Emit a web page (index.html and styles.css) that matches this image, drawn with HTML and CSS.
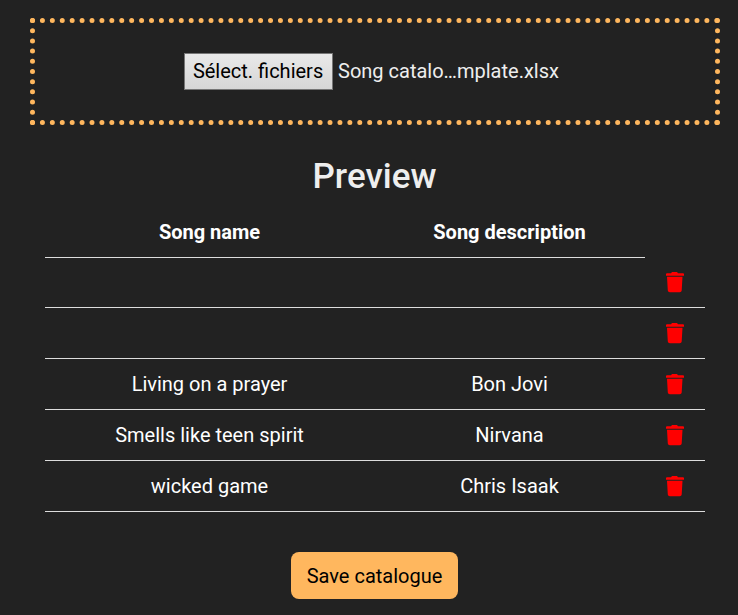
FILE: index.html
```html
<!DOCTYPE html>
<html lang="en">
<head>
<meta charset="utf-8">
<title>Song catalogue</title>
<link rel="stylesheet" href="styles.css">
</head>
<body>
<svg width="0" height="0" class="defs"><symbol id="trash" viewBox="0 0 18 21"><path d="M5 1.200 6 0h5l1 1.200h5l1 .6v2H0v-2l1-.6zM1 4.800h15.500L15.700 18.500q-.2 1.800-2 1.800H3.800q-1.800 0-2-1.800z"/></symbol></svg>
<main class="page">
  <div class="dropzone">
    <button class="file-button">Sélect. fichiers</button>
    <span class="file-name">Song catalo…mplate.xlsx</span>
  </div>
  <h1 class="title">Preview</h1>
  <table class="songs">
    <thead><tr><th class="col-name">Song name</th><th class="col-desc">Song description</th><td class="col-action"></td></tr></thead>
    <tbody>
      <tr class="first"><td></td><td></td><td><svg class="icon"><use href="#trash"/></svg></td></tr>
      <tr><td></td><td></td><td><svg class="icon"><use href="#trash"/></svg></td></tr>
      <tr><td>Living on a prayer</td><td>Bon Jovi</td><td><svg class="icon"><use href="#trash"/></svg></td></tr>
      <tr><td>Smells like teen spirit</td><td>Nirvana</td><td><svg class="icon"><use href="#trash"/></svg></td></tr>
      <tr><td>wicked game</td><td>Chris Isaak</td><td><svg class="icon"><use href="#trash"/></svg></td></tr>
    </tbody>
  </table>
  <button class="save">Save catalogue</button>
</main>
</body>
</html>
```

FILE: styles.css
```css
* { box-sizing: border-box; }
body { margin: 0; background: #222; color: #fff; font: 20px/24px Roboto, sans-serif; }
.defs { display: block; }
.page { width: 690px; margin: 18px 0 0 30px; display: flex; flex-direction: column; align-items: center; }
.dropzone { width: 100%; height: 107px; border: 5px dotted #ffb75e; display: flex; align-items: center; justify-content: center; gap: 5px; padding-right: 7px; }
.file-button { height: 37px; width: 149px; padding: 0 1px 2px 0; border: 1px solid #767676; background: linear-gradient(#e9e9e9, #d6d6d6); color: #000; font: inherit; }
.file-name { padding-bottom: 2px; color: #eee; }
.title { margin: 32px 0 0; padding-right: 1px; font-size: 35px; line-height: 40px; font-weight: 500; color: #eee; }
.songs { width: 660px; margin-top: 10px; border-collapse: collapse; table-layout: fixed; text-align: center; }
.col-name { width: 329px; }
.col-desc { width: 271px; }
.col-action { width: 60px; }
th { height: 50px; padding: 0; border-bottom: 1px solid #ddd; }
td { height: 51px; padding: 0; }
thead td { height: 50px; }
tbody .first td { height: 50px; }
tbody td { border-bottom: 1px solid #ddd; }
.icon { display: block; width: 18px; height: 21px; margin: 2px auto 0; fill: red; }
.save { margin: 40px 1px 0 0; width: 167px; height: 47px; padding: 2px 0 0; border: 0; border-radius: 8px; background: #ffb75e; color: #000; font: inherit; }
```
